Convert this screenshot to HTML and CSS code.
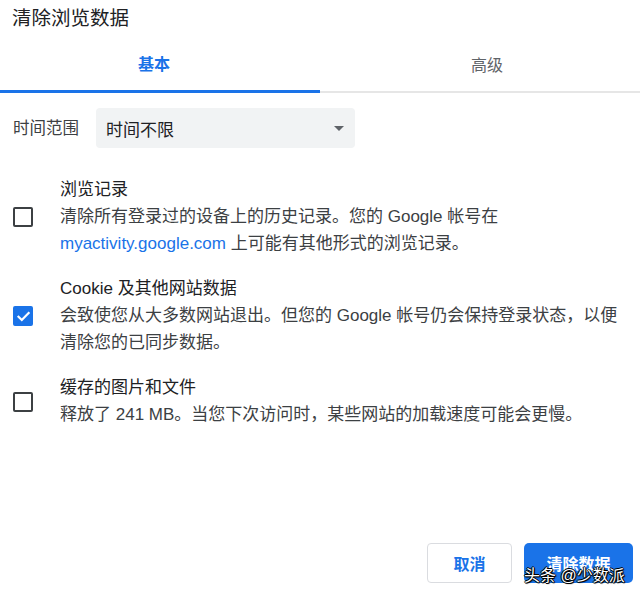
FILE: index.html
```html
<!DOCTYPE html>
<html lang="zh-CN">
<head>
<meta charset="utf-8">
<title>清除浏览数据</title>
<link rel="stylesheet" href="styles.css">
</head>
<body>
<div class="dialog">
  <div class="title">清除浏览数据</div>
  <div class="tabs">
    <div class="tab tab-active"><span class="tab-label tab-label-left">基本</span></div>
    <div class="tab"><span class="tab-label tab-label-right">高级</span></div>
  </div>
  <div class="range-row">
    <span class="range-label">时间范围</span>
    <div class="select">
      <span class="select-text">时间不限</span>
      <svg class="select-arrow" width="10" height="5" viewBox="0 0 10 5"><path d="M0 0 L10 0 L5 5 Z" fill="#5f6368"/></svg>
    </div>
  </div>
  <div class="items">
    <div class="item">
      <span class="checkbox"></span>
      <div class="item-text">
        <div class="item-title">浏览记录</div>
        <div class="item-desc">清除所有登录过的设备上的历史记录。您的 Google 帐号在 <span class="link">myactivity.google.com</span> 上可能有其他形式的浏览记录。</div>
      </div>
    </div>
    <div class="item">
      <span class="checkbox checkbox-checked">
        <svg width="15" height="15" viewBox="0 0 15 15"><path d="M2.5 7.8 L5.8 11 L12.6 4" fill="none" stroke="#fff" stroke-width="2.2" stroke-linecap="square"/></svg>
      </span>
      <div class="item-text">
        <div class="item-title">Cookie 及其他网站数据</div>
        <div class="item-desc">会致使您从大多数网站退出。但您的 Google 帐号仍会保持登录状态，以便清除您的已同步数据。</div>
      </div>
    </div>
    <div class="item">
      <span class="checkbox"></span>
      <div class="item-text">
        <div class="item-title">缓存的图片和文件</div>
        <div class="item-desc">释放了 241 MB。当您下次访问时，某些网站的加载速度可能会更慢。</div>
      </div>
    </div>
  </div>
  <div class="footer">
    <button class="btn btn-cancel">取消</button>
    <button class="btn btn-primary">清除数据</button>
  </div>
  <div class="watermark">头条 @少数派</div>
</div>
</body>
</html>
```

FILE: styles.css
```css
* { box-sizing: border-box; }
html, body { margin: 0; padding: 0; background: #fff; }
body {
  font-family: "Liberation Sans", "Noto Sans CJK SC", sans-serif;
  color: #202124;
}
.dialog {
  position: relative;
  width: 640px;
  height: 598px;
  display: flex;
  flex-direction: column;
  overflow: hidden;
}
.title {
  padding: 5px 0 0 12px;
  font-size: 19.5px;
  line-height: 27px;
  height: 32px;
  color: #202124;
}
.tabs {
  display: flex;
  align-items: flex-end;
}
.tab {
  flex: 1;
  display: flex;
  justify-content: center;
  padding-top: 22px;
  padding-bottom: 14px;
  border-bottom: 2px solid #e6e6e6;
  font-size: 16px;
  line-height: 22px;
  color: #5f6368;
}
.tab-active {
  border-bottom: 3px solid #1a73e8;
  padding-bottom: 14px;
  color: #1a73e8;
  font-weight: bold;
}
.tab-label-left { margin-right: 12px; }
.tab-label-right { margin-left: 14px; }
.range-row {
  display: flex;
  align-items: center;
  gap: 17px;
  margin-top: 15px;
  padding-left: 13px;
}
.range-label {
  font-size: 16.5px;
  color: #3c4043;
  line-height: 24px;
}
.select {
  width: 259px;
  height: 40px;
  background: #f1f3f4;
  border-radius: 4px;
  display: flex;
  align-items: center;
  justify-content: space-between;
  padding: 0 11px 0 10px;
}
.select-text {
  font-size: 17px;
  color: #202124;
}
.select-arrow { display: block; }
.items {
  margin-top: 29px;
  display: flex;
  flex-direction: column;
  gap: 19px;
}
.item {
  display: flex;
  align-items: center;
  padding-left: 13px;
  padding-right: 15px;
}
.checkbox {
  flex: none;
  width: 20px;
  height: 20px;
  border: 2px solid #3c4043;
  border-radius: 2px;
  margin-right: 27px;
  display: flex;
  align-items: center;
  justify-content: center;
}
.checkbox-checked {
  background: #1a73e8;
  border-color: #1a73e8;
}
.checkbox-checked svg { display: block; }
.item-text { flex: 1; font-size: 17px; }
.item-title {
  line-height: 26px;
  color: #202124;
}
.item-desc {
  line-height: 27px;
  color: #3c4043;
}
.link { color: #1a73e8; }
.footer {
  margin-top: auto;
  display: flex;
  justify-content: flex-end;
  gap: 12px;
  padding: 0 7px 15px 0;
}
.btn {
  height: 40px;
  border-radius: 4px;
  font-family: "Liberation Sans", "Noto Sans CJK SC", sans-serif;
  font-size: 16px;
  font-weight: bold;
  cursor: pointer;
}
.btn-cancel {
  width: 85px;
  background: #fff;
  border: 1px solid #dadce0;
  color: #1a73e8;
}
.btn-primary {
  width: 109px;
  background: #1a73e8;
  border: none;
  border-radius: 5px;
  color: #fff;
}
.watermark {
  position: absolute;
  left: 524px;
  top: 565px;
  font-size: 16px;
  line-height: 22px;
  color: #fff;
  text-shadow: 1px 0 0 #000, -1px 0 0 #000, 0 1px 0 #000, 0 -1px 0 #000, 1px 1px 1px #000;
}
```
